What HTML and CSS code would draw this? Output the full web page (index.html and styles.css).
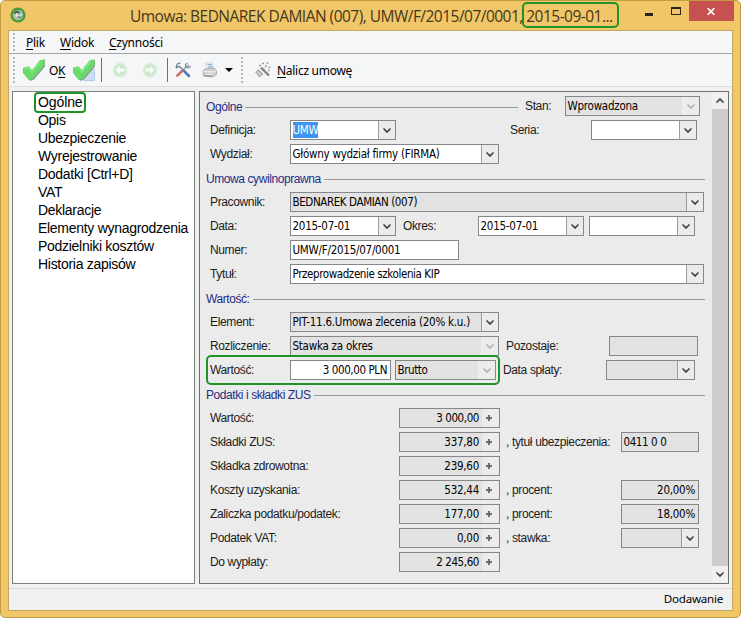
FILE: index.html
```html
<!DOCTYPE html>
<html lang="pl">
<head>
<meta charset="utf-8">
<title>Umowa</title>
<link rel="stylesheet" href="styles.css">
</head>
<body>
<svg width="0" height="0" class="defs">
  <symbol id="chev" viewBox="0 0 8 7"><path d="M.8 1.2v1.500L4 5.800 7.200 2.700V1.200L4 4z" fill="currentColor" stroke="currentColor" stroke-width=".8"/></symbol>
  <symbol id="check" viewBox="0 0 22 22"><path d="M1 9.500l5-1 4 4L18 2l4-1v6.500L11 20.500 7.500 22z" fill="#8f9a90"/><path d="M0 8.700 5.500 7.300 9 11.300 16.800 1.200 21.500.3V6L9.800 19.800 5.800 21.300 0 14z" fill="#66db68"/><path d="M1.500 10l3.700-.7L9 13.400 17.800 2.500" fill="none" stroke="#80e882" stroke-width="1.300"/></symbol>
</svg>
<div class="window">
  <header class="titlebar">
    <svg class="app-icon" viewBox="0 0 16 16"><circle cx="8" cy="8" r="7.600" fill="#459c36"/><circle cx="8" cy="8" r="5.300" fill="#a9bfa4"/><path d="M3.500 6Q4.500 3 8 3.500L13 8l-3 3.500L8 10z" fill="#4a6457"/><circle cx="7" cy="7.900" r="1.900" fill="#e0e6e2"/><path d="M9.300 5.500 13 8l-3.700 2.500z" fill="#dbe9d8"/></svg>
    <h1 class="title">Umowa: BEDNAREK DAMIAN (007), UMW/F/2015/07/0001, 2015-09-01...</h1>
    <div class="controls">
      <svg class="min" viewBox="0 0 8 3"><path d="M0 0h8v3H0z" fill="#2b2418"/></svg>
      <span class="max"></span>
      <span class="close"><svg viewBox="0 0 8 7"><path d="M.7.2l6.600 6.600M7.300.2L.7 6.800" stroke="#fff" stroke-width="1.700"/></svg></span>
    </div>
  </header>
  <div class="client">
    <nav class="menu"><i class="grip"></i><span class="m1"><u>P</u>lik</span><span class="m2"><u>W</u>idok</span><span class="m3"><u>C</u>zynności</span></nav>
    <div class="toolbar">
      <i class="grip"></i>
      <svg class="chk" viewBox="0 0 22 22"><use href="#check"/></svg>
      <span class="ok">O<u>K</u></span>
      <svg class="chk" viewBox="0 0 22 22"><path d="M11.500 6h6.500l4 4v12H9.500z" fill="#c9dcf1"/><path d="M11 21.500h10.500V13" fill="none" stroke="#b3c9e4"/><use href="#check"/></svg>
      <i class="sep s1"></i>
      <svg class="arrow" viewBox="0 0 16 16"><circle cx="8" cy="8" r="7.400" fill="#dcefdb"/><circle cx="8" cy="8" r="6" fill="#cfe8cd"/><path d="M3.500 8 8 3.800v2.700h4.300v3H8v2.700z" fill="#f6fcf5"/></svg>
      <svg class="arrow a2" viewBox="0 0 16 16"><circle cx="8" cy="8" r="7.400" fill="#dcefdb"/><circle cx="8" cy="8" r="6" fill="#cfe8cd"/><path d="M12.500 8 8 3.800v2.700H3.700v3H8v2.700z" fill="#f6fcf5"/></svg>
      <i class="sep s2"></i>
      <svg class="tools" viewBox="0 0 16 16"><path d="M8 8 2.300 13.700" stroke="#cf6f69" stroke-width="2.600" stroke-linecap="round"/><path d="M8 8 12 4l2-.5" stroke="#8a94a2" stroke-width="1.300" fill="none"/><path d="M4.500 4.500 9 9" stroke="#8894a8" stroke-width="1.600"/><path d="M9 9l5 5" stroke="#5578b8" stroke-width="2.500" stroke-linecap="round"/><path d="M1 6Q1 3.500 3 1.500l2.500-.3M1 6l3-1.500L5.500 5" stroke="#6b768a" stroke-width="1.200" fill="none"/><path d="M10.500 5V2.500L12.500 1M11 5.500h3.500L15.500 4" stroke="#8b96a8" stroke-width="1.300" fill="none"/></svg>
      <svg class="printer" viewBox="0 0 16 16"><path d="M3.500 1 10 .8l1.500 6.700H5z" fill="#f2f5fa" stroke="#b8c3d4" stroke-width=".7"/><path d="M5.500 2.500h4.200M6 4.300h4.200M6.500 6h4" stroke="#86a2cb" stroke-width=".9"/><path d="M1 9l3-2.500 8-.5 2.500 2.500v4L11 15l-9.500-.8z" fill="#cfcfd1" stroke="#a4a5a7" stroke-width=".8"/><path d="M1.500 9.500 11 10l3.300-1.400M4 12.300l6 .3" stroke="#f6f6f6" fill="none"/><path d="M3 13.500l7 .4" stroke="#747b83" stroke-width=".8"/></svg>
      <svg class="drop" viewBox="0 0 8 4"><path d="M0 0h8L4 4z" fill="#000"/></svg>
      <i class="grip g2"></i>
      <svg class="wand" viewBox="0 0 16 16"><path d="M6 5.500 14 13.500" stroke="#77797b" stroke-width="2.400"/><path d="M7 5.500 14 12.500" stroke="#c5c5c5" stroke-width=".8"/><path d="M.8 10.500 3.500 7.500 8 12 4.500 15z" fill="#bcbcbc" stroke="#8c8c8c" stroke-width=".7"/><path d="M2.500 10.500 5.500 13" stroke="#eee"/><path d="M4 3.500h2M7 1.500h2M10 4h2M11.500 1h2M13.500 5.500h2M8.500 6.500h1M13 8.500h1.500" stroke="#9a9d9f" stroke-width="1.500"/></svg>
      <span class="calc"><u>N</u>alicz umowę</span>
    </div>
    <main class="body">
      <ul class="tree">
        <li>Ogólne</li><li>Opis</li><li>Ubezpieczenie</li><li>Wyrejestrowanie</li><li>Dodatki [Ctrl+D]</li><li>VAT</li><li>Deklaracje</li><li>Elementy wynagrodzenia</li><li>Podzielniki kosztów</li><li>Historia zapisów</li>
      </ul>
      <section class="panel">
        <div class="form">
          <div class="row"><div class="legend lg1"><span>Ogólne</span></div><label class="stan">Stan:</label><div class="field ro w135 off"><span>Wprowadzona</span><b><svg><use href="#chev"/></svg></b></div></div>
          <div class="row"><label class="lab">Definicja:</label><div class="field w106"><span><mark>UMW</mark></span><b><svg><use href="#chev"/></svg></b></div><label class="seria">Seria:</label><div class="field w106"><span></span><b><svg><use href="#chev"/></svg></b></div></div>
          <div class="row"><label class="lab">Wydział:</label><div class="field w209"><span>Główny wydział firmy (FIRMA)</span><b><svg><use href="#chev"/></svg></b></div></div>
          <div class="row"><div class="legend"><span>Umowa cywilnoprawna</span></div></div>
          <div class="row"><label class="lab">Pracownik:</label><div class="field ro w414"><span class="tight">BEDNAREK DAMIAN (007)</span><b><svg><use href="#chev"/></svg></b></div></div>
          <div class="row"><label class="lab">Data:</label><div class="field w106"><span>2015-07-01</span><b><svg><use href="#chev"/></svg></b></div><label class="okres">Okres:</label><div class="field w106"><span>2015-07-01</span><b><svg><use href="#chev"/></svg></b></div><div class="field w106 next"><span></span><b><svg><use href="#chev"/></svg></b></div></div>
          <div class="row"><label class="lab">Numer:</label><div class="field w169"><span>UMW/F/2015/07/0001</span></div></div>
          <div class="row"><label class="lab">Tytuł:</label><div class="field w414"><span class="tight">Przeprowadzenie szkolenia KIP</span><b><svg><use href="#chev"/></svg></b></div></div>
          <div class="row"><div class="legend"><span>Wartość:</span></div></div>
          <div class="row"><label class="lab">Element:</label><div class="field ro w209"><span>PIT-11.6.Umowa zlecenia (20% k.u.)</span><b><svg><use href="#chev"/></svg></b></div></div>
          <div class="row"><label class="lab">Rozliczenie:</label><div class="field ro w209 off"><span>Stawka za okres</span><b><svg><use href="#chev"/></svg></b></div><label class="poz">Pozostaje:</label><div class="field ro w89"></div></div>
          <div class="row"><label class="lab">Wartość:</label><div class="field w101 right"><span class="tight">3 000,00 PLN</span></div><div class="field ro w101 off brutto"><span class="tight">Brutto</span><b><svg><use href="#chev"/></svg></b></div><label class="splata">Data spłaty:</label><div class="field ro w89"><span></span><b><svg><use href="#chev"/></svg></b></div></div>
          <div class="row"><div class="legend"><span>Podatki i składki ZUS</span></div></div>
          <div class="row"><label class="wide">Wartość:</label><div class="field ro w101 right"><span class="tight">3 000,00</span><em></em></div></div>
          <div class="row"><label class="wide">Składki ZUS:</label><div class="field ro w101 right"><span>337,80</span><em></em></div><label class="side">, tytuł ubezpieczenia:</label><div class="field ro w78"><span class="tight">0411 0 0</span></div></div>
          <div class="row"><label class="wide">Składka zdrowotna:</label><div class="field ro w101 right"><span>239,60</span><em></em></div></div>
          <div class="row"><label class="wide">Koszty uzyskania:</label><div class="field ro w101 right"><span>532,44</span><em></em></div><label class="side">, procent:</label><div class="field ro w78 right"><span>20,00%</span></div></div>
          <div class="row"><label class="wide">Zaliczka podatku/podatek:</label><div class="field ro w101 right"><span>177,00</span><em></em></div><label class="side">, procent:</label><div class="field ro w78 right"><span>18,00%</span></div></div>
          <div class="row"><label class="wide">Podatek VAT:</label><div class="field ro w101 right"><span>0,00</span><em></em></div><label class="side">, stawka:</label><div class="field ro w78"><span></span><b><svg><use href="#chev"/></svg></b></div></div>
          <div class="row"><label class="wide">Do wypłaty:</label><div class="field ro w101 right"><span class="tight">2 245,60</span><em></em></div></div>
        </div>
        <div class="scroll"><b><svg class="up"><use href="#chev"/></svg></b><i></i><b><svg><use href="#chev"/></svg></b></div>
      </section>
    </main>
    <footer class="status">Dodawanie</footer>
  </div>
  <div class="ring ring-title"></div>
  <div class="ring ring-tree"></div>
  <div class="ring ring-value"></div>
</div>
</body>
</html>
```
FILE: styles.css
```css
* { box-sizing: border-box; }
html, body { margin: 0; height: 618px; overflow: hidden; background: #fff; }
body { font: 11.5px "DejaVu Sans Condensed", "DejaVu Sans", sans-serif; color: #000; }
.defs { position: absolute; }
u { text-decoration-thickness: 1px; text-underline-offset: 2px; }
.window { position: relative; width: 741px; height: 618px; background: #f0c669; border: 1px solid #c09c45; border-radius: 5px; padding: 0 7px 7px; }
.titlebar { height: 29px; display: flex; align-items: flex-start; }
.app-icon { width: 16px; height: 16px; margin: 6px 0 0 2px; flex: none; }
.title { margin: 2px 0 0 104px; width: 484px; font: 15.5px/26px "Open Sans", sans-serif; color: #45371a; white-space: nowrap; letter-spacing: -.52px; }
.controls { display: flex; flex: 1; }
.min { width: 8px; height: 3px; margin: 12px 0 0 32px; }
.max { width: 10px; height: 8px; border: 1px solid #2b2418; border-top-width: 2px; margin: 6px 0 0 18px; flex: none; }
.close { width: 45px; height: 20px; margin-left: 8px; background: #c75050; display: flex; align-items: center; justify-content: center; flex: none; }
.close svg { width: 8px; height: 7px; }
.client { height: 581px; border: 1px solid #c5a85d; background: #f0f0f0; display: flex; flex-direction: column; }
.menu { height: 23px; background: #f5f6f7; border-bottom: 1px solid #a5a6a8; display: flex; align-items: center; font: 12px "Noto Sans", sans-serif; letter-spacing: -.25px; flex: none; }
.grip { width: 2px; height: 18px; margin-left: 4px; background: repeating-linear-gradient(#b4b5b7 0 2px, transparent 2px 4px); flex: none; }
.m1 { margin-left: 11px; width: 34px; }
.m2 { width: 49px; }
.toolbar { height: 33px; background: #f5f6f7; border-bottom: 1px solid #ddd; display: flex; align-items: center; font: 12px "Noto Sans", sans-serif; letter-spacing: -.28px; flex: none; }
.toolbar .grip { height: 26px; }
.chk { width: 22px; height: 22px; margin-left: 8px; flex: none; }
.ok { margin-left: 4px; width: 24px; }
.ok + .chk { margin-left: 0; }
.sep { width: 1px; height: 24px; background: #6f7072; flex: none; }
.s1 { margin-left: 6px; }
.s2 { margin-left: 9px; }
.arrow { width: 16px; height: 16px; margin-left: 10px; flex: none; }
.a2 { margin-left: 14px; }
.tools { width: 16px; height: 16px; margin-left: 7px; }
.printer { width: 16px; height: 16px; margin-left: 11px; }
.drop { width: 8px; height: 4px; margin-left: 7px; }
.toolbar .g2 { margin-left: 8px; }
.wand { width: 16px; height: 16px; margin-left: 12px; }
.calc { margin-left: 6px; white-space: nowrap; }
.body { display: flex; flex: 1; padding: 4px 3px; gap: 4px; min-height: 0; }
.tree { margin: 0; padding: 1px 0 0 25px; width: 183px; list-style: none; background: #fff; border: 1px solid #7a827c; font: 14px/18px "Liberation Sans", sans-serif; letter-spacing: -.29px; }
.tree li { height: 18px; white-space: nowrap; }
.tree li:first-child { letter-spacing: -.1px; }
.panel { flex: 1; border: 1px solid #6c706e; background: #ebebeb; display: flex; min-width: 0; }
.form { flex: 1; padding-top: 2px; min-width: 0; }
.row { height: 24px; padding-left: 10px; display: flex; align-items: center; }
label, .legend { font: 12px/20px "Liberation Sans", sans-serif; letter-spacing: -.36px; color: #1c1c1c; white-space: nowrap; flex: none; }
.legend { display: flex; align-items: center; width: 499px; margin-left: -4px; color: #232d85; padding-top: 2px; gap: 3px; letter-spacing: -.42px; }
.legend::after { content: ""; flex: 1; height: 1px; margin-top: 1px; background: #989a9b; }
.lg1 { width: 312px; }
.stan { margin-left: 7px; width: 40px; }
.lab { width: 80px; }
.seria { margin-left: 114px; width: 81px; }
.okres { margin-left: 7px; width: 75px; }
.poz { margin-left: 7px; width: 103px; }
.splata { margin-left: 7px; width: 103px; }
.wide { width: 189px; }
.side { margin-left: 6px; width: 115px; }
.field { height: 20px; border: 1px solid #858789; background: #fff; display: flex; flex: none; line-height: 18px; white-space: nowrap; }
.field > span { flex: 1; padding-left: 1.5px; min-width: 0; letter-spacing: -.25px; }
.field > .tight { letter-spacing: -.4px; }
.field.right > span { text-align: right; padding-right: 3px; }
.field b { width: 17px; background: #ececec; border-left: 1px solid #9a9c9d; display: flex; align-items: center; justify-content: center; color: #505254; flex: none; }
.field svg, .scroll svg { width: 8px; height: 7px; }
.ro { background: #e2e2e2; }
.off b { color: #b7b9ba; border-left-color: #eee; }
.field em { width: 17px; flex: none; background: linear-gradient(#6e6e6e, #6e6e6e) 4px 8px / 6px 2px no-repeat, linear-gradient(#6e6e6e, #6e6e6e) 6px 6px / 2px 6px no-repeat, #ececec; }
.next { margin-left: 5px; }
.brutto { margin-left: 4px; }
.w78 { width: 78px; } .w89 { width: 89px; } .w101 { width: 101px; } .w106 { width: 106px; } .w135 { width: 135px; } .w169 { width: 169px; } .w209 { width: 209px; } .w414 { width: 414px; }
mark { background: #3e94ee; color: #fff; padding: 1px 0; }
.scroll { width: 16px; display: flex; flex-direction: column; background: #f0f0f0; color: #505254; }
.scroll i { flex: 1; background: #cdcdcd; }
.scroll b { height: 17px; display: flex; align-items: center; justify-content: center; }
.up { transform: rotate(180deg); }
.status { height: 22px; border-top: 1px solid #d8d8d8; text-align: right; padding-right: 9px; font: 11.6px/20px "Noto Sans", sans-serif; letter-spacing: -.25px; flex: none; }
.ring { position: absolute; border: 2px solid #1e9428; border-radius: 5px; }
.ring-title { left: 521px; top: 1px; width: 97px; height: 26px; }
.ring-tree { left: 33px; top: 91px; width: 52px; height: 21px; border-radius: 4px; }
.ring-value { left: 205px; top: 354px; width: 294px; height: 30px; }
```
